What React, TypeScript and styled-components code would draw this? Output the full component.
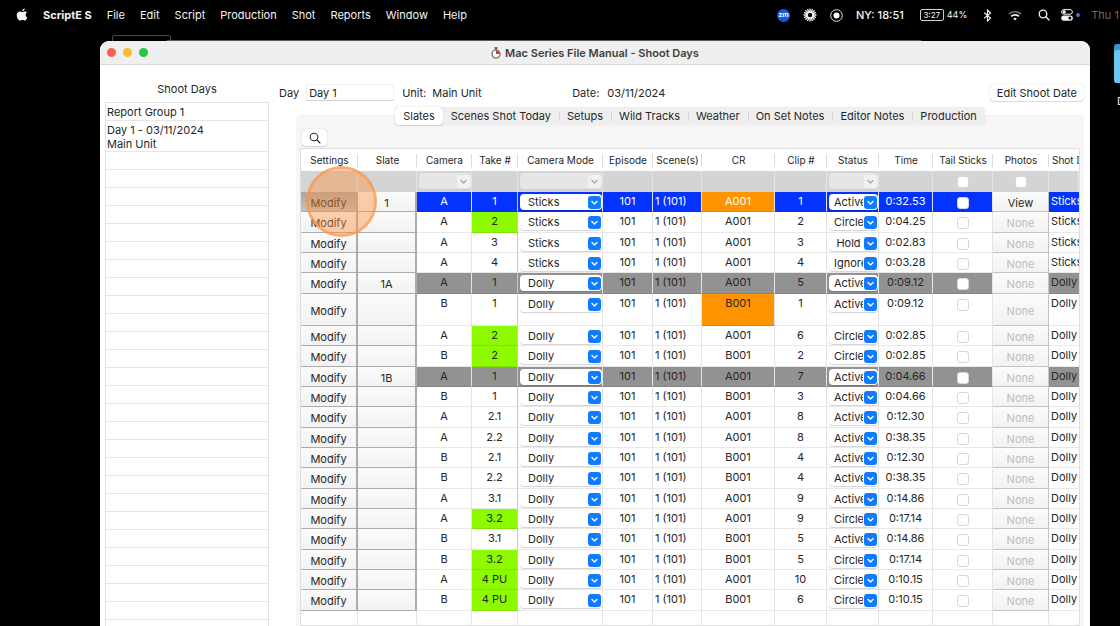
import React from "react";
import styled, { createGlobalStyle, css } from "styled-components";

const Global = createGlobalStyle`
  *, *::before, *::after { box-sizing: border-box; }
  body {
    margin: 0;
    background: #000;
    font-family: Inter, "Liberation Sans", sans-serif;
    font-size: 11px;
    line-height: 14px;
    color: #262626;
  }
  button, input, select { font: inherit; color: inherit; margin: 0; }
`;

const Desktop = styled.div`
  position: relative;
  display: flex;
  flex-direction: column;
  height: 100vh;
  overflow: hidden;
  background: #000;
`;

/* ---------- menu bar ---------- */

const MenuBar = styled.header`
  display: flex;
  flex: none;
  align-items: center;
  justify-content: space-between;
  height: 30px;
  padding-left: 16px;
  overflow: hidden;
  color: #f4f4f4;
`;

const MenuGroup = styled.nav`
  display: flex;
  align-items: center;
  gap: 15px;
`;

const MenuItem = styled.button<{ $bold?: boolean }>`
  padding: 0;
  border: 0;
  background: none;
  white-space: nowrap;
  font-weight: ${(p) => (p.$bold ? 700 : 400)};
`;

const StatusArea = styled.div`
  display: flex;
  flex: none;
  align-items: center;
  gap: 16px;
  width: 343px;
  white-space: nowrap;
`;

const StatusGroup = styled.div<{ $gap: number }>`
  display: flex;
  flex: none;
  align-items: center;
  gap: ${(p) => p.$gap}px;
`;

const StatusIcon = styled.svg`
  flex: none;
  display: block;
`;

const ZoomBadge = styled.span`
  flex: none;
  width: 13px;
  height: 13px;
  border-radius: 50%;
  background: #1b57dd;
  color: #fff;
  font-size: 7px;
  font-weight: 700;
  line-height: 12px;
  text-align: center;
`;

const CityTime = styled.span`
  font-weight: 500;
`;

const Battery = styled.span`
  display: flex;
  align-items: center;
  gap: 3px;
  font-size: 9px;
`;

const BatteryBody = styled.span`
  width: 24px;
  height: 12px;
  border: 1px solid #cfcfcf;
  border-radius: 2px;
  font-size: 8px;
  line-height: 10px;
  text-align: center;
`;

const Controls = styled.span`
  display: flex;
  align-items: center;
  gap: 3px;
`;

const Clock = styled.span`
  color: #6b6b6b;
`;

/* ---------- things behind the window ---------- */

const BackWindow = styled.div`
  position: absolute;
  top: 35px;
  left: 112px;
  width: 59px;
  height: 20px;
  border: 1px solid #4a4a4a;
  border-radius: 2px;
`;

const BackEdge = styled.div`
  position: absolute;
  top: 40px;
  right: 198px;
  left: 166px;
  height: 4px;
  border-radius: 2px 2px 0 0;
  background: #5c5c5c;
`;

const Folder = styled.svg`
  position: absolute;
  top: 43px;
  left: calc(100% - 6px);
`;

const FolderLabel = styled.span`
  position: absolute;
  top: 94px;
  left: calc(100% - 3px);
  color: #eee;
  white-space: nowrap;
`;

/* ---------- window ---------- */

const Window = styled.main`
  position: relative;
  display: flex;
  flex: 1;
  flex-direction: column;
  min-height: 0;
  margin: 11px 30px 0 100px;
  overflow: hidden;
  border-radius: 9px 9px 0 0;
  background: #fff;
`;

const TitleBar = styled.div`
  display: grid;
  flex: none;
  grid-template-columns: 1fr auto 1fr;
  align-items: center;
  height: 24px;
  padding: 0 7px;
  border-bottom: 1px solid #dadada;
  background: #efefef;
`;

const Lights = styled.div`
  display: flex;
  gap: 7px;
`;

const Light = styled.button<{ $color: string }>`
  width: 9px;
  height: 9px;
  padding: 0;
  border: 0;
  border-radius: 50%;
  background: ${(p) => p.$color};
`;

const Title = styled.h1`
  display: flex;
  align-items: center;
  gap: 4px;
  margin: 0;
  color: #404040;
  font-size: 11px;
  font-weight: 600;
`;

const Body = styled.div`
  display: flex;
  flex: 1;
  min-height: 0;
`;

const Sidebar = styled.aside`
  flex: none;
  width: 169px;
  padding: 17px 0 0 5px;
`;

const SideTitle = styled.h2`
  margin: 0 0 6px;
  font-size: 11px;
  font-weight: 400;
  text-align: center;
`;

const DayList = styled.ul`
  margin: 0;
  padding: 0;
  border: 1px solid #e2e2e2;
  list-style: none;
`;

const DayItem = styled.li`
  min-height: 18px;
  padding: 2px 1px 0;
  border-bottom: 1px solid #e6e6e6;
  white-space: pre-line;
`;

const Main = styled.section`
  display: flex;
  flex: 1;
  flex-direction: column;
  min-width: 0;
  padding: 18px 6px 0 27px;
`;

const DayBar = styled.div`
  display: flex;
  flex: none;
  align-items: center;
  height: 18px;
  margin-left: -17px;
  padding-top: 1px;
`;

const DayField = styled.label`
  display: flex;
  align-items: center;
  gap: 7px;
`;

const DayInput = styled.input`
  width: 88px;
  height: 17px;
  padding: 1px 2px 0;
  border: 1px solid #f0f0f0;
  border-bottom-color: #cfcfcf;
  background: #fff;
`;

const Pair = styled.div<{ $width: number; $gap: number }>`
  display: flex;
  gap: ${(p) => p.$gap}px;
  width: ${(p) => p.$width}px;
  margin-left: 8px;
  white-space: nowrap;
`;

const raised = css`
  border: 0;
  border-radius: 4px;
  background: #fff;
  box-shadow: 0 0 1px rgba(0, 0, 0, 0.3), 0 1px 1px rgba(0, 0, 0, 0.12);
`;

const EditButton = styled.button`
  ${raised}
  height: 17px;
  margin-left: auto;
  padding: 0 7px;
  line-height: 16px;
  white-space: nowrap;
`;

const Tabs = styled.div`
  position: relative;
  z-index: 1;
  display: flex;
  flex: none;
  align-self: center;
  height: 18px;
  margin-top: 6px;
  border-radius: 5px;
  background: #efefef;
  box-shadow: 0 0 1px rgba(0, 0, 0, 0.2);
`;

const Tab = styled.button<{ $active?: boolean }>`
  position: relative;
  height: 18px;
  padding: 0 8px;
  border: 0;
  background: none;
  line-height: 17px;
  white-space: nowrap;
  ${(p) => p.$active && raised}
  & + &:not(:nth-child(2))::before {
    content: "";
    position: absolute;
    top: 4px;
    left: 0;
    width: 1px;
    height: 10px;
    background: #d6d6d6;
  }
`;

const Panel = styled.div`
  display: flex;
  flex: 1;
  flex-direction: column;
  min-height: 0;
  margin-top: -10px;
  padding: 13px 4px 0;
  border: 1px solid #f0f0f0;
  border-width: 1px 0 0;
  border-radius: 5px 5px 0 0;
  background: #f6f6f6;
`;

const SearchButton = styled.button`
  ${raised}
  display: grid;
  flex: none;
  place-items: center;
  width: 25px;
  height: 17px;
  margin: 0 0 2px 2px;
  padding: 0;
`;

const Frame = styled.div`
  position: relative;
  flex: 1;
  min-height: 0;
  overflow: hidden;
  border: 1px solid #dedede;
  background: #fff;
`;

/* ---------- table ---------- */

const Table = styled.table`
  width: 100%;
  border-collapse: separate;
  border-spacing: 0;
  table-layout: fixed;
`;

const Head = styled.th`
  position: relative;
  height: 22px;
  padding: 0;
  overflow: hidden;
  font-size: 10px;
  font-weight: 400;
  white-space: nowrap;
  &:not(:last-child)::after {
    content: "";
    position: absolute;
    top: 5px;
    right: 0;
    width: 1px;
    height: 13px;
    background: #dcdcdc;
  }
  &:last-child { padding-left: 3px; text-align: left; }
`;

const FilterCell = styled.td`
  height: 21px;
  padding: 0;
  border-right: 1px solid #e4e4e4;
  background: #d4d4d4;
  text-align: center;
  vertical-align: top;
`;

type Tone = "blue" | "gray" | "green" | "orange" | "plain";
const tones: Record<Tone, string> = {
  blue: "#0433ff",
  gray: "#929292",
  green: "#8efa00",
  orange: "#ff9300",
  plain: "transparent",
};

const Row = styled.tr<{ $tall?: boolean }>`
  height: ${(p) => (p.$tall ? 32 : 20)}px;
  &:nth-child(3n + 2) { height: 21px; }
`;

const Cell = styled.td<{ $tone?: Tone; $light?: boolean; $left?: boolean; $strong?: boolean }>`
  height: inherit;
  padding: 0 0 0 ${(p) => (p.$left ? 2 : 0)}px;
  overflow: hidden;
  border-right: 1px solid ${(p) => (p.$strong ? "#c8c8c8" : "#e4e4e4")};
  border-bottom: 1px solid rgba(0, 0, 0, 0.09);
  background: ${(p) => tones[p.$tone ?? "plain"]};
  color: ${(p) => (p.$light ? "#fff" : "#262626")};
  line-height: 19px;
  text-align: ${(p) => (p.$left ? "left" : "center")};
  vertical-align: top;
  white-space: nowrap;
  &:last-child { border-right: 0; }
`;

const ButtonCell = styled.td`
  height: inherit;
  padding: 0;
`;

const CellButton = styled.button<{ $pressed?: boolean; $soft?: boolean }>`
  display: block;
  width: 100%;
  height: 100%;
  padding: 2px 0 0;
  border: 0 solid ${(p) => (p.$soft ? "#c4c4c4" : "#acacac")};
  border-width: 0 ${(p) => (p.$soft ? 1 : 2)}px 1px 0;
  background: ${(p) => (p.$pressed ? "linear-gradient(#a8a8a8, #c0c0c0)" : "linear-gradient(#fbfbfb, #f2f2f2)")};
  line-height: 16px;
  text-align: center;
  &:disabled { color: #bcbcbc; }
`;

const SelectBox = styled.span<{ $off?: boolean }>`
  display: flex;
  align-items: center;
  height: 16px;
  margin: 2px 0 0 2px;
  padding-right: 1px;
  border-radius: 4px;
  background: ${(p) => (p.$off ? "#e6e6e6" : "#fff")};
  box-shadow: 0 1px 1px rgba(0, 0, 0, ${(p) => (p.$off ? 0.04 : 0.18)});
`;

const Select = styled.select<{ $center?: boolean }>`
  flex: 1;
  min-width: 0;
  height: 16px;
  margin-right: 1px;
  padding: 0 0 0 ${(p) => (p.$center ? 5 : 8)}px;
  border: 0;
  appearance: none;
  background: none;
  line-height: 16px;
  text-align: ${(p) => (p.$center ? "center" : "left")};
  text-overflow: clip;
  opacity: 1;
`;

const Badge = styled.svg<{ $off?: boolean }>`
  flex: none;
  border-radius: 3px;
  background: ${(p) => (p.$off ? "#f1f1f1" : "#0f7bff")};
  color: ${(p) => (p.$off ? "#a8a8a8" : "#fff")};
`;

const Check = styled.input`
  display: block;
  width: 12px;
  height: 12px;
  margin: 5px auto 0;
  border: 1px solid #d6d6d6;
  border-radius: 3px;
  appearance: none;
  background: #fff;
`;

const ClickHalo = styled.div`
  position: absolute;
  top: 17px;
  left: 5px;
  width: 71px;
  height: 71px;
  border: 3px solid rgba(250, 148, 66, 0.78);
  border-radius: 50%;
  background: rgba(255, 146, 66, 0.43);
  background-clip: padding-box;
  pointer-events: none;
`;

/* ---------- data ---------- */

const menus = ["File", "Edit", "Script", "Production", "Shot", "Reports", "Window", "Help"];
const tabs = ["Slates", "Scenes Shot Today", "Setups", "Wild Tracks", "Weather", "On Set Notes", "Editor Notes", "Production"];
const columns: [string, number | undefined][] = [
  ["Settings", 57], ["Slate", 59], ["Camera", 55], ["Take #", 46], ["Camera Mode", 85],
  ["Episode", 50], ["Scene(s)", 49], ["CR", 73], ["Clip #", 52], ["Status", 52],
  ["Time", 54], ["Tail Sticks", 60], ["Photos", 56], ["Shot D", undefined],
];

type Take = {
  slate?: string; cam: string; take: string; mode: string; cr: string; clip: string;
  status: string; time: string; tone?: "blue" | "gray"; good?: boolean; flag?: boolean; tall?: boolean;
};
const takes: Take[] = [
  { slate: "1", cam: "A", take: "1", mode: "Sticks", cr: "A001", clip: "1", status: "Active", time: "0:32.53", tone: "blue", flag: true },
  { cam: "A", take: "2", mode: "Sticks", cr: "A001", clip: "2", status: "Circle", time: "0:04.25", good: true },
  { cam: "A", take: "3", mode: "Sticks", cr: "A001", clip: "3", status: "Hold", time: "0:02.83" },
  { cam: "A", take: "4", mode: "Sticks", cr: "A001", clip: "4", status: "Ignore", time: "0:03.28" },
  { slate: "1A", cam: "A", take: "1", mode: "Dolly", cr: "A001", clip: "5", status: "Active", time: "0:09.12", tone: "gray" },
  { cam: "B", take: "1", mode: "Dolly", cr: "B001", clip: "1", status: "Active", time: "0:09.12", flag: true, tall: true },
  { cam: "A", take: "2", mode: "Dolly", cr: "A001", clip: "6", status: "Circle", time: "0:02.85", good: true },
  { cam: "B", take: "2", mode: "Dolly", cr: "B001", clip: "2", status: "Circle", time: "0:02.85", good: true },
  { slate: "1B", cam: "A", take: "1", mode: "Dolly", cr: "A001", clip: "7", status: "Active", time: "0:04.66", tone: "gray" },
  { cam: "B", take: "1", mode: "Dolly", cr: "B001", clip: "3", status: "Active", time: "0:04.66" },
  { cam: "A", take: "2.1", mode: "Dolly", cr: "A001", clip: "8", status: "Active", time: "0:12.30" },
  { cam: "A", take: "2.2", mode: "Dolly", cr: "A001", clip: "8", status: "Active", time: "0:38.35" },
  { cam: "B", take: "2.1", mode: "Dolly", cr: "B001", clip: "4", status: "Active", time: "0:12.30" },
  { cam: "B", take: "2.2", mode: "Dolly", cr: "B001", clip: "4", status: "Active", time: "0:38.35" },
  { cam: "A", take: "3.1", mode: "Dolly", cr: "A001", clip: "9", status: "Active", time: "0:14.86" },
  { cam: "A", take: "3.2", mode: "Dolly", cr: "A001", clip: "9", status: "Circle", time: "0:17.14", good: true },
  { cam: "B", take: "3.1", mode: "Dolly", cr: "B001", clip: "5", status: "Active", time: "0:14.86" },
  { cam: "B", take: "3.2", mode: "Dolly", cr: "B001", clip: "5", status: "Circle", time: "0:17.14", good: true },
  { cam: "A", take: "4 PU", mode: "Dolly", cr: "A001", clip: "10", status: "Circle", time: "0:10.15", good: true },
  { cam: "B", take: "4 PU", mode: "Dolly", cr: "B001", clip: "6", status: "Circle", time: "0:10.15", good: true },
];

/* ---------- parts ---------- */

function Dropdown({ label, value, center, off }: { label: string; value?: string; center?: boolean; off?: boolean }) {
  return (
    <SelectBox $off={off}>
      <Select aria-label={label} $center={center} disabled={off} defaultValue={value}>
        {value && <option>{value}</option>}
      </Select>
      <Badge $off={off} width="13" height="13" viewBox="0 0 13 13" aria-hidden="true">
        <path d="M4 5.6 6.5 8 9 5.6" fill="none" stroke="currentColor" strokeWidth="1.4" strokeLinecap="round" strokeLinejoin="round" />
      </Badge>
    </SelectBox>
  );
}

function TakeRow({ t }: { t: Take }) {
  const base: Tone = t.tone ?? "plain";
  const light = t.tone === "blue";
  const name = `${t.cam} ${t.take}`;
  return (
    <Row $tall={t.tall}>
      <ButtonCell><CellButton $pressed={light}>Modify</CellButton></ButtonCell>
      <ButtonCell><CellButton aria-label="Slate">{t.slate}</CellButton></ButtonCell>
      <Cell $tone={base} $light={light}>{t.cam}</Cell>
      <Cell $tone={t.good ? "green" : base} $light={light} $strong>{t.take}</Cell>
      <Cell $tone={base}><Dropdown label={`Camera mode ${name}`} value={t.mode} /></Cell>
      <Cell $tone={base} $light={light}>101</Cell>
      <Cell $tone={base} $light={light} $left>1 (101)</Cell>
      <Cell $tone={t.flag ? "orange" : base} $light={light}>{t.cr}</Cell>
      <Cell $tone={base} $light={light}>{t.clip}</Cell>
      <Cell $tone={base}><Dropdown label={`Status ${name}`} value={t.status} center /></Cell>
      <Cell $tone={base} $light={light}>{t.time}</Cell>
      <Cell $tone={base}><Check type="checkbox" aria-label={`Tail sticks ${name}`} /></Cell>
      <ButtonCell><CellButton $soft disabled={!light}>{light ? "View" : "None"}</CellButton></ButtonCell>
      <Cell $tone={base} $light={light} $left>{t.mode}</Cell>
    </Row>
  );
}

export default function App() {
  return (
    <Desktop>
      <Global />
      <MenuBar>
        <MenuGroup>
          <StatusIcon width="12" height="14" viewBox="0 0 12 14" fill="#f4f4f4" aria-label="Apple">
            <path d="M8.7.4c.1 1.4-1.2 2.8-2.600 2.700C6 1.800 7.300.500 8.700.400zM10.900 4.800c-1.900 1.200-1.500 3.800.500 4.600-.500 1.400-1.600 3.200-2.700 3.200-.900 0-1.200-.500-2.300-.500s-1.500.500-2.300.500C2.500 12.600.700 9.700.700 7.300c0-2.400 1.500-3.800 3.100-3.800 1 0 1.800.600 2.500.600.600 0 1.500-.700 2.700-.700.800 0 1.500.500 1.900 1.400z" />
          </StatusIcon>
          <MenuItem $bold>ScriptE S</MenuItem>
          {menus.map((m) => <MenuItem key={m}>{m}</MenuItem>)}
        </MenuGroup>
        <StatusArea>
          <StatusGroup $gap={13}>
            <ZoomBadge>zm</ZoomBadge>
            <StatusIcon width="14" height="14" viewBox="0 0 14 14" fill="none" stroke="#f4f4f4" aria-hidden="true">
              <circle cx="7" cy="7" r="3" strokeWidth="1.6" />
              <path
                strokeWidth="1.3"
                strokeLinecap="round"
                d="M7 3.500V1M7 13v-2.500M3.500 7H1M13 7h-2.500M4.500 4.500 2.800 2.800M11.200 11.200 9.500 9.500M4.500 9.500l-1.700 1.700M11.200 2.800 9.500 4.500M5.700 3.800 4.700 1.500M9.300 12.500l-1-2.300M3.800 8.300l-2.300 1M12.500 4.700l-2.300 1M3.800 5.700l-2.300-1M12.500 9.300l-2.300-1M5.700 10.200l-1 2.300M9.300 1.500l-1 2.300"
              />
            </StatusIcon>
            <StatusIcon width="13" height="13" viewBox="0 0 13 13" aria-hidden="true">
              <circle cx="6.5" cy="6.5" r="5.8" fill="none" stroke="#dcdcdc" />
              <circle cx="6.5" cy="6.5" r="3" fill="#fff" />
            </StatusIcon>
            <CityTime>NY: 18:51</CityTime>
          </StatusGroup>
          <Battery><BatteryBody>3:27</BatteryBody>44%</Battery>
          <StatusIcon width="9" height="13" viewBox="0 0 9 13" fill="none" stroke="#f4f4f4" strokeWidth="1.1" aria-hidden="true">
            <path d="M1.2 3.8 7.6 9 4.500 12V1l3.100 3-6.400 5.200" />
          </StatusIcon>
          <StatusIcon width="14" height="11" viewBox="0 0 14 11" fill="none" strokeWidth="1.7" aria-hidden="true">
            <path d="M1 4.200a8.500 8.500 0 0 1 12 0" stroke="#6e6e6e" />
            <path d="M3.200 6.400a5.400 5.400 0 0 1 7.600 0" stroke="#f4f4f4" />
            <path d="M7 10.500 5.200 8.600a2.600 2.600 0 0 1 3.600 0z" fill="#f4f4f4" />
          </StatusIcon>
          <StatusGroup $gap={11}>
            <StatusIcon width="12" height="12" viewBox="0 0 12 12" fill="none" stroke="#f4f4f4" strokeWidth="1.3" strokeLinecap="round" aria-hidden="true">
              <circle cx="5" cy="5" r="3.8" /><path d="m8 8 3 3" />
            </StatusIcon>
            <Controls>
              <StatusIcon width="12" height="12" viewBox="0 0 12 12" aria-hidden="true">
                <rect x=".6" y=".6" width="10.8" height="4.6" rx="2.3" fill="none" stroke="#f4f4f4" />
                <circle cx="3.2" cy="2.9" r="1.7" fill="#f4f4f4" />
                <rect x=".2" y="6.400" width="11.6" height="5.4" rx="2.7" fill="#f4f4f4" />
                <circle cx="8.9" cy="9.1" r="1.5" fill="#000" />
              </StatusIcon>
              <StatusIcon width="4" height="4" viewBox="0 0 4 4" fill="#6b5be0" aria-hidden="true"><circle cx="2" cy="2" r="2" /></StatusIcon>
            </Controls>
            <Clock>Thu 1</Clock>
          </StatusGroup>
        </StatusArea>
      </MenuBar>

      <BackWindow />
      <BackEdge />
      <Folder width="46" height="41" viewBox="0 0 46 41" aria-hidden="true">
        <rect y="1" width="46" height="39" rx="3" fill="#2f9fd0" />
        <rect y="7" width="46" height="33" rx="3" fill="#6cc6f2" />
      </Folder>
      <FolderLabel>D</FolderLabel>

      <Window>
        <TitleBar>
          <Lights>
            <Light $color="#fb5f57" aria-label="Close" />
            <Light $color="#fcbb2f" aria-label="Minimize" />
            <Light $color="#27c840" aria-label="Zoom" />
          </Lights>
          <Title>
            <StatusIcon width="10" height="12" viewBox="0 0 10 12" aria-hidden="true">
              <circle cx="5" cy="7" r="4" fill="#fff" stroke="#555" strokeWidth="1.1" />
              <path d="M5 7V3.500A3.500 3.500 0 0 1 8.500 7z" fill="#d33b2c" />
              <path d="M5 3V1M3.500.800h3" stroke="#444" strokeWidth="1.2" />
            </StatusIcon>
            Mac Series File Manual - Shoot Days
          </Title>
        </TitleBar>
        <Body>
          <Sidebar>
            <SideTitle>Shoot Days</SideTitle>
            <DayList>
              <DayItem>Report Group 1</DayItem>
              <DayItem>{"Day 1 - 03/11/2024\nMain Unit"}</DayItem>
              {Array.from({ length: 30 }, (_, i) => <DayItem key={i} />)}
            </DayList>
          </Sidebar>
          <Main>
            <DayBar>
              <DayField>Day <DayInput defaultValue="Day 1" /></DayField>
              <Pair $width={162} $gap={6}><span>Unit:</span><span>Main Unit</span></Pair>
              <Pair $width={110} $gap={8}><span>Date:</span><span>03/11/2024</span></Pair>
              <EditButton>Edit Shoot Date</EditButton>
            </DayBar>
            <Tabs role="tablist">
              {tabs.map((t, i) => <Tab key={t} role="tab" aria-selected={i === 0} $active={i === 0}>{t}</Tab>)}
            </Tabs>
            <Panel>
              <SearchButton aria-label="Search">
                <svg width="12" height="12" viewBox="0 0 12 12" fill="none" stroke="#2b2b2b" strokeWidth="1.1" strokeLinecap="round">
                  <circle cx="5" cy="5" r="3.8" /><path d="m8 8 3 3" />
                </svg>
              </SearchButton>
              <Frame>
                <Table>
                  <colgroup>{columns.map(([n, w]) => <col key={n} width={w} />)}</colgroup>
                  <thead>
                    <tr>{columns.map(([n]) => <Head key={n}>{n}</Head>)}</tr>
                    <tr>
                      {columns.map(([n]) => (
                        <FilterCell key={n}>
                          {["Camera", "Camera Mode", "Status"].includes(n) && <Dropdown label={`Filter ${n}`} off />}
                          {["Tail Sticks", "Photos"].includes(n) && <Check type="checkbox" aria-label={`Filter ${n}`} />}
                        </FilterCell>
                      ))}
                    </tr>
                  </thead>
                  <tbody>
                    {takes.map((t, i) => <TakeRow key={i} t={t} />)}
                    <Row $tall>{columns.map(([n]) => <Cell key={n} />)}</Row>
                  </tbody>
                </Table>
                <ClickHalo />
              </Frame>
            </Panel>
          </Main>
        </Body>
      </Window>
    </Desktop>
  );
}
